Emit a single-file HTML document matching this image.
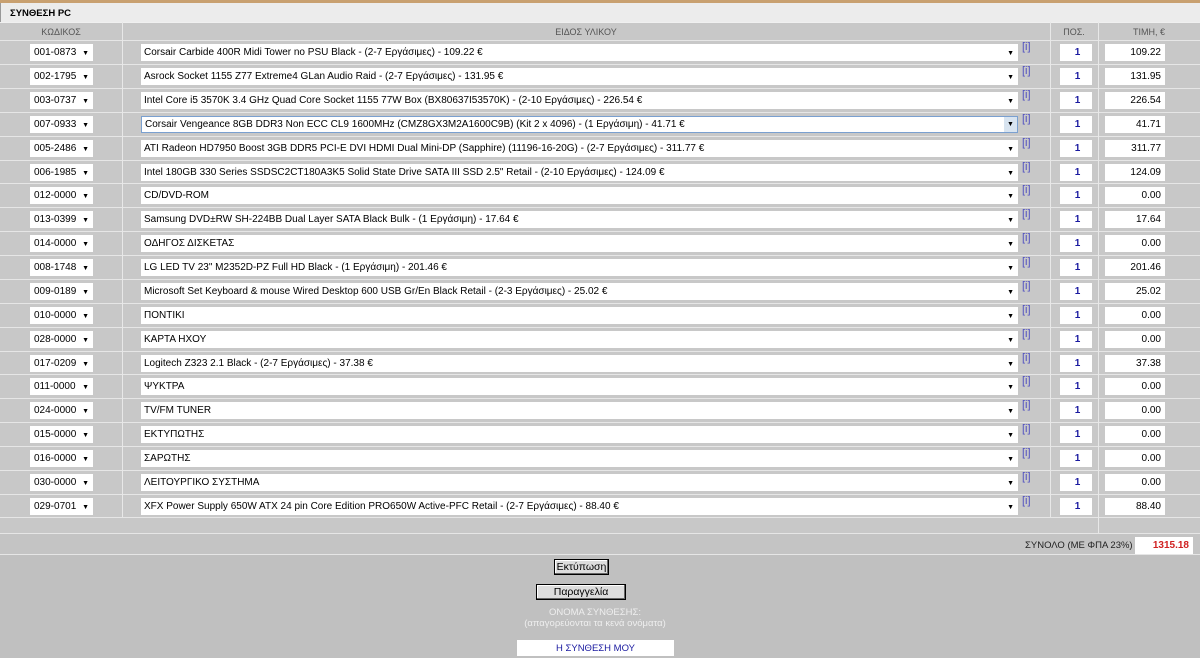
<!DOCTYPE html>
<html><head><meta charset="utf-8"><style>
*{box-sizing:border-box;margin:0;padding:0}
body{width:1200px;height:658px;overflow:hidden;background:#c0c0c0;font-family:"Liberation Sans","DejaVu Sans",sans-serif;font-size:10px;color:#000;position:relative}
.a{position:absolute}
.top{left:0;top:0;width:1200px;height:3px;background:#c8a070}
.title{left:0;top:3px;width:1200px;height:19px;background:#ececec;border-left:1px solid #999;font-weight:bold;font-size:9.5px;padding:5px 0 0 9px}
.hdr{top:22px;height:18px;background:#c8c8c8;color:#555;font-size:9px;text-align:center;padding-top:4px;border-top:1px solid #f0f0f0}
.row{left:0;width:1200px;height:24px;border-top:1px solid #e6e6e6;background:#c8c8c8}
.v{top:22px;width:1px;height:511px;background:#e8e8e8}
.sel{background:#fff;height:17px;top:3px;font-size:10px;padding:3px 0 0 3px;white-space:nowrap;overflow:hidden}
.code{left:30px;width:63px;padding-left:4px}
.desc{left:141px;width:877px}
.arr{position:absolute;right:4px;top:6px;font-size:7px}
.info{left:1022px;top:0px;color:#5050c0;font-size:11px}
.pos{left:1060px;width:32px;text-align:center;color:#1a1aa0;font-weight:bold}
.pr{left:1105px;width:60px;text-align:right;padding-right:4px}
.btn{background:#ddd;border:1px solid #000;box-shadow:inset -1px -1px #666,inset 1px 1px #fff;text-align:center;font-size:10.5px;height:16px;padding-top:1px}
</style></head><body>
<div class="a top"></div>
<div class="a title">ΣΥΝΘΕΣΗ PC</div>
<div class="a hdr" style="left:0;width:122px">ΚΩΔΙΚΟΣ</div>
<div class="a hdr" style="left:122px;width:928px">ΕΙΔΟΣ ΥΛΙΚΟΥ</div>
<div class="a hdr" style="left:1050px;width:48px">ΠΟΣ.</div>
<div class="a hdr" style="left:1098px;width:102px">ΤΙΜΗ, €</div>

<div class="a row" style="top:40px"><div class="a sel code">001-0873<span class="arr">▼</span></div><div class="a sel desc">Corsair Carbide 400R Midi Tower no PSU Black - (2-7 Εργάσιμες) - 109.22 €<span class="arr">▼</span></div><div class="a info">[i]</div><div class="a sel pos">1</div><div class="a sel pr">109.22</div></div>
<div class="a row" style="top:64px"><div class="a sel code">002-1795<span class="arr">▼</span></div><div class="a sel desc">Asrock Socket 1155 Z77 Extreme4 GLan Audio Raid - (2-7 Εργάσιμες) - 131.95 €<span class="arr">▼</span></div><div class="a info">[i]</div><div class="a sel pos">1</div><div class="a sel pr">131.95</div></div>
<div class="a row" style="top:88px"><div class="a sel code">003-0737<span class="arr">▼</span></div><div class="a sel desc">Intel Core i5 3570K 3.4 GHz Quad Core Socket 1155 77W Box (BX80637I53570K) - (2-10 Εργάσιμες) - 226.54 €<span class="arr">▼</span></div><div class="a info">[i]</div><div class="a sel pos">1</div><div class="a sel pr">226.54</div></div>
<div class="a row" style="top:112px"><div class="a sel code">007-0933<span class="arr">▼</span></div><div class="a sel desc" style="border:1px solid #7aa0d0;padding-top:2px">Corsair Vengeance 8GB DDR3 Non ECC CL9 1600MHz (CMZ8GX3M2A1600C9B) (Kit 2 x 4096) - (1 Εργάσιμη) - 41.71 €<span class="arr" style="background:#d8e4f0;right:0;top:0;width:13px;height:15px;text-align:center;padding-top:4px">▼</span></div><div class="a info">[i]</div><div class="a sel pos">1</div><div class="a sel pr">41.71</div></div>
<div class="a row" style="top:136px"><div class="a sel code">005-2486<span class="arr">▼</span></div><div class="a sel desc">ATI Radeon HD7950 Boost 3GB DDR5 PCI-E DVI HDMI Dual Mini-DP (Sapphire) (11196-16-20G) - (2-7 Εργάσιμες) - 311.77 €<span class="arr">▼</span></div><div class="a info">[i]</div><div class="a sel pos">1</div><div class="a sel pr">311.77</div></div>
<div class="a row" style="top:160px"><div class="a sel code">006-1985<span class="arr">▼</span></div><div class="a sel desc">Intel 180GB 330 Series SSDSC2CT180A3K5 Solid State Drive SATA III SSD 2.5" Retail - (2-10 Εργάσιμες) - 124.09 €<span class="arr">▼</span></div><div class="a info">[i]</div><div class="a sel pos">1</div><div class="a sel pr">124.09</div></div>
<div class="a row" style="top:183px"><div class="a sel code">012-0000<span class="arr">▼</span></div><div class="a sel desc">CD/DVD-ROM<span class="arr">▼</span></div><div class="a info">[i]</div><div class="a sel pos">1</div><div class="a sel pr">0.00</div></div>
<div class="a row" style="top:207px"><div class="a sel code">013-0399<span class="arr">▼</span></div><div class="a sel desc">Samsung DVD±RW SH-224BB Dual Layer SATA Black Bulk - (1 Εργάσιμη) - 17.64 €<span class="arr">▼</span></div><div class="a info">[i]</div><div class="a sel pos">1</div><div class="a sel pr">17.64</div></div>
<div class="a row" style="top:231px"><div class="a sel code">014-0000<span class="arr">▼</span></div><div class="a sel desc">ΟΔΗΓΟΣ ΔΙΣΚΕΤΑΣ<span class="arr">▼</span></div><div class="a info">[i]</div><div class="a sel pos">1</div><div class="a sel pr">0.00</div></div>
<div class="a row" style="top:255px"><div class="a sel code">008-1748<span class="arr">▼</span></div><div class="a sel desc">LG LED TV 23" M2352D-PZ Full HD Black - (1 Εργάσιμη) - 201.46 €<span class="arr">▼</span></div><div class="a info">[i]</div><div class="a sel pos">1</div><div class="a sel pr">201.46</div></div>
<div class="a row" style="top:279px"><div class="a sel code">009-0189<span class="arr">▼</span></div><div class="a sel desc">Microsoft Set Keyboard &amp; mouse Wired Desktop 600 USB Gr/En Black Retail - (2-3 Εργάσιμες) - 25.02 €<span class="arr">▼</span></div><div class="a info">[i]</div><div class="a sel pos">1</div><div class="a sel pr">25.02</div></div>
<div class="a row" style="top:303px"><div class="a sel code">010-0000<span class="arr">▼</span></div><div class="a sel desc">ΠΟΝΤΙΚΙ<span class="arr">▼</span></div><div class="a info">[i]</div><div class="a sel pos">1</div><div class="a sel pr">0.00</div></div>
<div class="a row" style="top:327px"><div class="a sel code">028-0000<span class="arr">▼</span></div><div class="a sel desc">ΚΑΡΤΑ ΗΧΟΥ<span class="arr">▼</span></div><div class="a info">[i]</div><div class="a sel pos">1</div><div class="a sel pr">0.00</div></div>
<div class="a row" style="top:351px"><div class="a sel code">017-0209<span class="arr">▼</span></div><div class="a sel desc">Logitech Z323 2.1 Black - (2-7 Εργάσιμες) - 37.38 €<span class="arr">▼</span></div><div class="a info">[i]</div><div class="a sel pos">1</div><div class="a sel pr">37.38</div></div>
<div class="a row" style="top:374px"><div class="a sel code">011-0000<span class="arr">▼</span></div><div class="a sel desc">ΨΥΚΤΡΑ<span class="arr">▼</span></div><div class="a info">[i]</div><div class="a sel pos">1</div><div class="a sel pr">0.00</div></div>
<div class="a row" style="top:398px"><div class="a sel code">024-0000<span class="arr">▼</span></div><div class="a sel desc">TV/FM TUNER<span class="arr">▼</span></div><div class="a info">[i]</div><div class="a sel pos">1</div><div class="a sel pr">0.00</div></div>
<div class="a row" style="top:422px"><div class="a sel code">015-0000<span class="arr">▼</span></div><div class="a sel desc">ΕΚΤΥΠΩΤΗΣ<span class="arr">▼</span></div><div class="a info">[i]</div><div class="a sel pos">1</div><div class="a sel pr">0.00</div></div>
<div class="a row" style="top:446px"><div class="a sel code">016-0000<span class="arr">▼</span></div><div class="a sel desc">ΣΑΡΩΤΗΣ<span class="arr">▼</span></div><div class="a info">[i]</div><div class="a sel pos">1</div><div class="a sel pr">0.00</div></div>
<div class="a row" style="top:470px"><div class="a sel code">030-0000<span class="arr">▼</span></div><div class="a sel desc">ΛΕΙΤΟΥΡΓΙΚΟ ΣΥΣΤΗΜΑ<span class="arr">▼</span></div><div class="a info">[i]</div><div class="a sel pos">1</div><div class="a sel pr">0.00</div></div>
<div class="a row" style="top:494px"><div class="a sel code">029-0701<span class="arr">▼</span></div><div class="a sel desc">XFX Power Supply 650W ATX 24 pin Core Edition PRO650W Active-PFC Retail - (2-7 Εργάσιμες) - 88.40 €<span class="arr">▼</span></div><div class="a info">[i]</div><div class="a sel pos">1</div><div class="a sel pr">88.40</div></div>
<div class="a row" style="top:517px;height:16px"></div>
<div class="a" style="left:0;top:533px;width:1200px;height:22px;background:#c4c4c4;border-top:1px solid #e6e6e6;border-bottom:1px solid #e6e6e6"></div>
<div class="a v" style="left:122px;height:495px"></div>
<div class="a v" style="left:1050px;height:495px"></div>
<div class="a v" style="left:1098px"></div>
<div class="a" style="left:1025px;top:540px;font-size:9.5px;color:#222">ΣΥΝΟΛΟ (ΜΕ ΦΠΑ 23%)</div>
<div class="a sel" style="left:1135px;top:537px;width:58px;text-align:right;padding-right:4px;color:#d02020;font-weight:bold">1315.18</div>
<div class="a btn" style="left:554px;top:559px;width:55px">Εκτύπωση</div>
<div class="a btn" style="left:536px;top:584px;width:90px">Παραγγελία</div>
<div class="a" style="left:400px;top:607px;width:390px;text-align:center;color:#eee;font-size:9.5px;line-height:11px">ΟΝΟΜΑ ΣΥΝΘΕΣΗΣ:<br>(απαγορεύονται τα κενά ονόματα)</div>
<div class="a" style="left:517px;top:640px;width:157px;height:16px;background:#fff;color:#1a1aa0;text-align:center;padding-top:3px;font-size:9.5px">Η ΣΥΝΘΕΣΗ ΜΟΥ</div>
</body></html>
